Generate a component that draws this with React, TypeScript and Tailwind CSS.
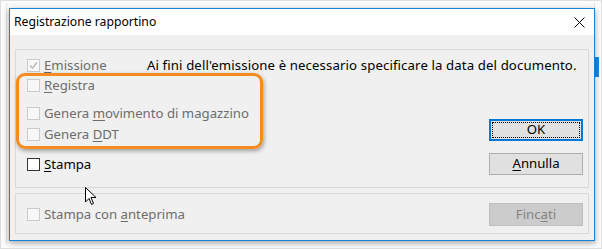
import React from "react";

const font = { fontFamily: '"Noto Sans", "Open Sans", Arial, sans-serif' };

interface CheckProps {
  label: React.ReactNode;
  checked?: boolean;
  disabled?: boolean;
}

const CheckBox: React.FC<CheckProps> = ({ label, checked, disabled }) => (
  <div className="flex items-center h-[13px]">
    <span
      className={`w-[13px] h-[13px] shrink-0 border flex items-center justify-center ${
        disabled ? "border-[#cccccc] bg-[#f7f7f7]" : "border-[#333333] bg-white"
      }`}
    >
      {checked && (
        <svg width="9" height="9" viewBox="0 0 9 9">
          <path d="M1 4.5 L3.5 7 L8 1.5" fill="none" stroke="#b5b5b5" strokeWidth="1.2" />
        </svg>
      )}
    </span>
    <span
      className={`ml-[4px] whitespace-nowrap leading-none ${
        disabled ? "text-[#6d6d6d]" : "text-black"
      }`}
    >
      {label}
    </span>
  </div>
);

const U: React.FC<{ children: React.ReactNode }> = ({ children }) => (
  <span className="underline underline-offset-2 decoration-1">{children}</span>
);

export default function App() {
  return (
    <div
      className="relative w-[602px] h-[249px] bg-[#fbfbfb] border border-[#dedede] overflow-hidden text-[13.2px]"
      style={font}
    >
      {/* background window edges */}
      <div className="absolute left-[5px] top-[2px] bottom-[4px] w-px bg-[#e2e2e2]" />
      <div className="absolute right-[2px] top-[56px] w-[6px] h-[20px] bg-[#1e88e5]" />
      <div className="absolute right-[6px] top-[2px] bottom-[4px] w-px bg-[#e4e4e4]" />

      {/* dialog */}
      <div className="absolute left-[8px] top-[7px] w-[586px] h-[233px] border border-[#1883d7] bg-[#f0f0f0] shadow-[0_2px_6px_rgba(0,0,0,0.35)] flex flex-col">
        <div className="h-[26px] bg-white flex items-center justify-between pl-[4px] pr-[9px] shrink-0">
          <span className="text-black text-[12.2px]">Registrazione rapportino</span>
          <svg width="11" height="11" viewBox="0 0 11 11">
            <path d="M0.5 0.5 L10.5 10.5 M10.5 0.5 L0.5 10.5" stroke="#000" strokeWidth="1" />
          </svg>
        </div>

        <div className="relative flex-1 flex flex-col gap-[5px] pt-[14px] pl-[5px] pr-[5px] pb-[6px]">
          {/* group 1 */}
          <div className="relative h-[139px] border border-[#d9d9d9] flex">
            <div className="flex-1 pl-[11px] pt-[9px] flex flex-col">
              <div className="flex items-center">
                <div className="w-[120px]">
                  <CheckBox checked disabled label={<><U>E</U>missione</>} />
                </div>
                <span className="text-black whitespace-nowrap leading-none tracking-[0.12px]">
                  Ai fini dell'emissione è necessario specificare la data del documento.
                </span>
              </div>
              <div className="mt-[7px]">
                <CheckBox disabled label={<><U>R</U>egistra</>} />
              </div>
              <div className="mt-[15px]">
                <CheckBox disabled label={<>Genera <U>m</U>ovimento di magazzino</>} />
              </div>
              <div className="mt-[8px]">
                <CheckBox disabled label={<>Genera <U>D</U>DT</>} />
              </div>
              <div className="mt-[17px]">
                <CheckBox label={<><U>S</U>tampa</>} />
              </div>
            </div>
            <div className="absolute right-[5px] top-[69px] w-[94px] flex flex-col gap-[12px]">
              <button className="h-[22px] border-2 border-[#0078d7] bg-[#e1e1e1] p-px">
                <span className="flex items-center justify-center h-full border border-dotted border-black text-black">
                  OK
                </span>
              </button>
              <button className="h-[22px] border border-[#adadad] bg-[#e1e1e1] text-black flex items-center justify-center">
                <span><U>A</U>nnulla</span>
              </button>
            </div>

            {/* orange highlight */}
            <div className="absolute left-[0px] top-[23px] w-[247px] h-[76px] rounded-[9px] border-[3px] border-[#f68b1f] shadow-[1px_2px_4px_rgba(0,0,0,0.35)]" />
          </div>

          {/* group 2 */}
          <div className="h-[41px] border border-[#d9d9d9] flex items-center justify-between pl-[11px] pr-[5px] pt-[2px]">
            <CheckBox disabled label={<>Stampa con <U>a</U>nteprima</>} />
            <button className="w-[94px] h-[23px] border border-[#bfbfbf] bg-[#cccccc] text-[#838383] flex items-center justify-center">
              <span>Finc<U>a</U>ti</span>
            </button>
          </div>

          {/* mouse cursor */}
          <svg
            className="absolute left-[75px] top-[152px]"
            width="13"
            height="19"
            viewBox="0 0 13 19"
          >
            <path
              d="M0.5 0.5 L0.5 15 L4 11.5 L6.5 17.5 L8.5 16.5 L6 10.5 L11 10.5 Z"
              fill="#fff"
              stroke="#000"
              strokeWidth="1"
            />
          </svg>
        </div>
      </div>
    </div>
  );
}
